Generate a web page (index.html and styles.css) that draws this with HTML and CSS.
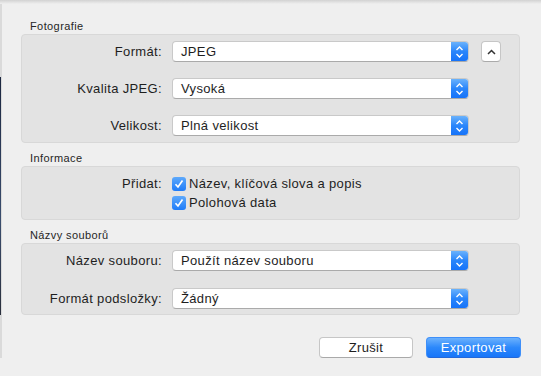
FILE: index.html
```html
<!DOCTYPE html>
<html lang="cs">
<head>
    <meta charset="UTF-8">
    <title>Export</title>
    <link rel="stylesheet" href="styles.css">
</head>
<body>
    <div class="sheet">
        <h3 class="group-title">Fotografie</h3>
        <div class="group">
            <div class="row">
                <span class="label">Formát:</span>
                <div class="popup">
                    <span class="popup-value">JPEG</span>
                    <span class="popup-arrows">
                        <svg width="9" height="14" viewBox="0 0 9 14"><path d="M1.5 5 L4.5 2 L7.5 5 M1.5 9 L4.5 12 L7.5 9" fill="none" stroke="#fff" stroke-width="1.4"/></svg>
                    </span>
                </div>
                <button class="disclosure">
                    <svg width="9" height="6" viewBox="0 0 9 6"><path d="M1 5 L4.5 1.5 L8 5" fill="none" stroke="#333" stroke-width="1.5"/></svg>
                </button>
            </div>
            <div class="row">
                <span class="label">Kvalita JPEG:</span>
                <div class="popup">
                    <span class="popup-value">Vysoká</span>
                    <span class="popup-arrows">
                        <svg width="9" height="14" viewBox="0 0 9 14"><path d="M1.5 5 L4.5 2 L7.5 5 M1.5 9 L4.5 12 L7.5 9" fill="none" stroke="#fff" stroke-width="1.4"/></svg>
                    </span>
                </div>
            </div>
            <div class="row">
                <span class="label">Velikost:</span>
                <div class="popup">
                    <span class="popup-value">Plná velikost</span>
                    <span class="popup-arrows">
                        <svg width="9" height="14" viewBox="0 0 9 14"><path d="M1.5 5 L4.5 2 L7.5 5 M1.5 9 L4.5 12 L7.5 9" fill="none" stroke="#fff" stroke-width="1.4"/></svg>
                    </span>
                </div>
            </div>
        </div>

        <h3 class="group-title">Informace</h3>
        <div class="group group-info">
            <div class="row row-top">
                <span class="label">Přidat:</span>
                <div class="checks">
                    <label class="check">
                        <span class="checkbox">
                            <svg width="14" height="14" viewBox="0 0 14 14"><path d="M3.5 7.2 L6 10 L10.5 3.5" fill="none" stroke="#fff" stroke-width="1.7"/></svg>
                        </span>
                        Název, klíčová slova a popis
                    </label>
                    <label class="check">
                        <span class="checkbox">
                            <svg width="14" height="14" viewBox="0 0 14 14"><path d="M3.5 7.2 L6 10 L10.5 3.5" fill="none" stroke="#fff" stroke-width="1.7"/></svg>
                        </span>
                        Polohová data
                    </label>
                </div>
            </div>
        </div>

        <h3 class="group-title">Názvy souborů</h3>
        <div class="group group-names">
            <div class="row">
                <span class="label">Název souboru:</span>
                <div class="popup">
                    <span class="popup-value">Použít název souboru</span>
                    <span class="popup-arrows">
                        <svg width="9" height="14" viewBox="0 0 9 14"><path d="M1.5 5 L4.5 2 L7.5 5 M1.5 9 L4.5 12 L7.5 9" fill="none" stroke="#fff" stroke-width="1.4"/></svg>
                    </span>
                </div>
            </div>
            <div class="row">
                <span class="label">Formát podsložky:</span>
                <div class="popup">
                    <span class="popup-value">Žádný</span>
                    <span class="popup-arrows">
                        <svg width="9" height="14" viewBox="0 0 9 14"><path d="M1.5 5 L4.5 2 L7.5 5 M1.5 9 L4.5 12 L7.5 9" fill="none" stroke="#fff" stroke-width="1.4"/></svg>
                    </span>
                </div>
            </div>
        </div>

        <div class="buttons">
            <button class="btn">Zrušit</button>
            <button class="btn btn-default">Exportovat</button>
        </div>
    </div>
</body>
</html>
```

FILE: styles.css
```css
html {
    background:
        linear-gradient(#1c2740, #3a4d6e 60%, #2a2f3c) 0 77px / 1px 238px no-repeat,
        linear-gradient(#dadada, #dadada) 0 0 / 2px 100% no-repeat,
        #efefef;
}
body {
    margin: 0;
    font-family: "Liberation Sans", Arial, sans-serif;
    font-size: 13px;
    letter-spacing: 0.35px;
    color: #1e1e1e;
}
.sheet {
    padding: 19px 21px 0 21px;
    background: linear-gradient(#d2d2d2, #efefef 4px) top / 100% 4px no-repeat;
}
.group-title {
    margin: 8px 0 0 0;
    padding-left: 9px;
    font-size: 11px;
    font-weight: normal;
    letter-spacing: 0.4px;
    line-height: 15px;
    color: #262626;
}
.sheet > .group-title:first-child {
    margin-top: 0;
}
.group {
    background: #e3e3e3;
    border: 1px solid #d8d8d8;
    border-radius: 4px;
    padding: 6px 0;
    display: flex;
    flex-direction: column;
    gap: 16px;
}
.group-info {
    padding: 8px 0 7px 0;
}
.group-names {
    padding: 6px 0 5px 0;
    gap: 17px;
}
.row {
    display: flex;
    align-items: center;
}
.row-top {
    align-items: flex-start;
}
.label {
    width: 140px;
    text-align: right;
    line-height: 18px;
    margin-right: 10px;
}
.popup {
    width: 297px;
    height: 21px;
    box-sizing: border-box;
    display: flex;
    background: #fff;
    border: 1px solid #c9c9c9;
    border-bottom-color: #aaa;
    border-radius: 4px;
    overflow: hidden;
}
.popup-value {
    flex: 1;
    padding-left: 8px;
    line-height: 19px;
}
.popup-arrows {
    width: 17px;
    display: flex;
    align-items: center;
    justify-content: center;
    background: linear-gradient(#6ab2fc, #2a86fb 50%, #1673f9);
}
.disclosure {
    margin-left: 12px;
    width: 20px;
    height: 21px;
    padding: 0;
    display: flex;
    align-items: center;
    justify-content: center;
    background: #fff;
    border: 1px solid #c6c6c6;
    border-bottom-color: #aaa;
    border-radius: 4px;
}
.checks {
    display: flex;
    flex-direction: column;
    gap: 1px;
}
.check {
    display: flex;
    align-items: center;
    gap: 3px;
    line-height: 18px;
}
.checkbox {
    width: 14px;
    height: 14px;
    border-radius: 3px;
    background: linear-gradient(#5ea9fb, #1e7cf9);
    display: flex;
}
.buttons {
    display: flex;
    justify-content: flex-end;
    gap: 13px;
    margin-top: 22px;
    margin-right: -1px;
}
.btn {
    width: 94px;
    height: 21px;
    padding: 0;
    font-family: "Liberation Sans", Arial, sans-serif;
    font-size: 13px;
    letter-spacing: 0.35px;
    color: #1e1e1e;
    background: #fff;
    border: 1px solid #c6c6c6;
    border-bottom-color: #a9a9a9;
    border-radius: 4px;
}
.btn-default {
    width: 95px;
    color: #fff;
    background: linear-gradient(#6bb1fd, #2c88fb 50%, #1876f9);
    border-color: #3e8ff9;
    border-bottom-color: #2468d8;
}
```
